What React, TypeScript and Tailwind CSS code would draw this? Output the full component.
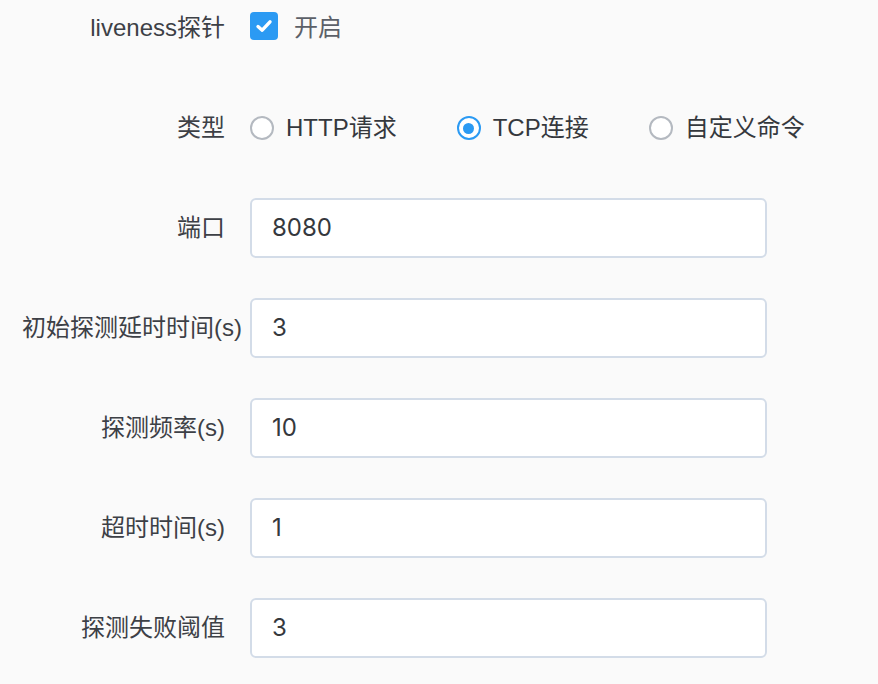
import { useState } from 'react';

const font = { fontFamily: '"Liberation Sans", "Noto Sans CJK SC", sans-serif' };

function Label({ children }: { children: React.ReactNode }) {
    return (
        <div className="ml-[22px] w-[203px] mr-[25px] shrink-0 text-right whitespace-nowrap text-[24px] text-[#3d4046]">
            {children}
        </div>
    );
}

function Radio({ checked, label }: { checked: boolean; label: string }) {
    return (
        <div className="flex items-center gap-[12px]">
            <span
                className={`w-[24px] h-[24px] rounded-full border-2 bg-white flex items-center justify-center ${
                    checked ? 'border-[#2b9af3]' : 'border-[#b4b9c0]'
                }`}
            >
                {checked && <span className="w-[11px] h-[11px] rounded-full bg-[#2b9af3]" />}
            </span>
            <span className="text-[24px] text-[#35383d]">{label}</span>
        </div>
    );
}

function Field({ label, value }: { label: string; value: string }) {
    return (
        <div className="flex items-center h-[60px] mb-[40px]">
            <Label>{label}</Label>
            <div className="w-[517px] h-[60px] rounded-[6px] border-2 border-[#d3dce8] bg-white flex items-center pl-[20px] text-[24px] text-[#35383d] font-['Inter',sans-serif]">
                {value}
            </div>
        </div>
    );
}

export default function App() {
    const [enabled] = useState(true);
    const fields = [
        { label: '端口', value: '8080' },
        { label: '初始探测延时时间(s)', value: '3' },
        { label: '探测频率(s)', value: '10' },
        { label: '超时时间(s)', value: '1' },
        { label: '探测失败阈值', value: '3' },
    ];

    return (
        <div className="w-[878px] h-[684px] bg-[#fafafa] overflow-hidden" style={font}>
            {/* liveness toggle */}
            <div className="flex items-center h-[56px] mb-[42px]">
                <Label>liveness探针</Label>
                <div className="flex items-center gap-[16px]">
                    <span className="w-[28px] h-[28px] shrink-0 rounded-[4px] bg-[#2b9af3] flex items-center justify-center -mt-[4px]">
                        {enabled && (
                            <svg width="20" height="20" viewBox="0 0 20 20" fill="none">
                                <path d="M4 10.5 L8.2 14.2 L16 5.8" stroke="white" strokeWidth="3.4" strokeLinecap="round" strokeLinejoin="round" />
                            </svg>
                        )}
                    </span>
                    <span className="text-[24px] text-[#5c6068]">开启</span>
                </div>
            </div>

            {/* probe type */}
            <div className="flex items-center h-[60px] mb-[40px]">
                <Label>类型</Label>
                <div className="flex items-center gap-[60px]">
                    <Radio checked={false} label="HTTP请求" />
                    <Radio checked={true} label="TCP连接" />
                    <Radio checked={false} label="自定义命令" />
                </div>
            </div>

            {fields.map((f) => (
                <Field key={f.label} label={f.label} value={f.value} />
            ))}
        </div>
    );
}
